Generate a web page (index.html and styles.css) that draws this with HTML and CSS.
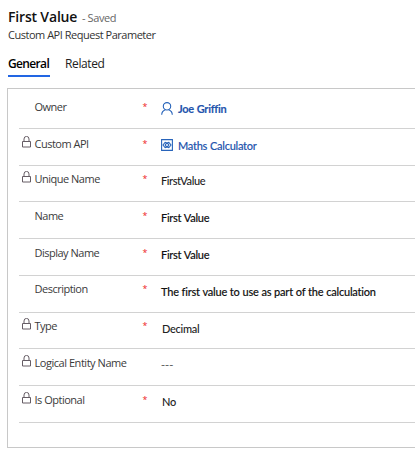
FILE: index.html
```
<!DOCTYPE html>
<html lang="en">
<head>
<meta charset="utf-8">
<title>First Value</title>
<link rel="stylesheet" href="styles.css">
</head>
<body>
<svg class="defs" width="0" height="0">
  <symbol id="lock" viewBox="0 0 9 12"><path d="M.5 5.500h8v5.500h-8zM2 5.500V3a2.500 2.600 0 0 1 5 0v2.500" fill="none" stroke="currentColor"/></symbol>
</svg>
<header class="head">
  <div class="title-line"><h1 class="title">First Value</h1><span class="saved">- Saved</span></div>
  <div class="subtitle">Custom API Request Parameter</div>
  <nav class="tabs"><a class="tab active">General</a><a class="tab related">Related</a></nav>
</header>
<main class="panel">
  <div class="row owner"><span></span><span class="label">Owner</span><span class="req">*</span>
    <span class="value link bold"><svg class="icon" width="12" height="13" viewBox="0 0 12 13"><circle cx="6" cy="4.3" r="3.7"/><path d="M.7 12.700C.8 10 2.200 8.600 4.300 7.800M7.700 7.800c2.100.8 3.500 2.200 3.600 4.900"/></svg><span>Joe Griffin</span></span></div>
  <div class="row custom"><svg class="lock"><use href="#lock"/></svg><span class="label">Custom API</span><span class="req">*</span>
    <span class="value link"><svg class="icon" width="12" height="12" viewBox="0 0 12 12"><path d="M.6.6h10.800v10.800H.6z"/><path d="M4.400 3 2 6l2.400 3M7.600 3 10 6 7.600 9M4 3.200 6 4l2-.8M4 8.800 6 8l2 .8M4.200 6 5 4.600h2L7.800 6 7 7.400H5z"/></svg><span>Maths Calculator</span></span></div>
  <div class="row unique"><svg class="lock"><use href="#lock"/></svg><span class="label">Unique Name</span><span class="req">*</span><span class="value light tight">FirstValue</span></div>
  <div class="row"><span></span><span class="label">Name</span><span class="req">*</span><span class="value">First Value</span></div>
  <div class="row"><span></span><span class="label">Display Name</span><span class="req">*</span><span class="value">First Value</span></div>
  <div class="row desc"><span></span><span class="label">Description</span><span class="req">*</span><span class="value text">The first value to use as part of the calculation</span></div>
  <div class="row type"><svg class="lock"><use href="#lock"/></svg><span class="label">Type</span><span class="req">*</span><span class="value light inset">Decimal</span></div>
  <div class="row"><svg class="lock"><use href="#lock"/></svg><span class="label logical">Logical Entity Name</span><span></span><span class="value dashes">---</span></div>
  <div class="row"><svg class="lock"><use href="#lock"/></svg><span class="label">Is Optional</span><span class="req">*</span><span class="value light inset">No</span></div>
</main>
</body>
</html>
```
FILE: styles.css
```
* { box-sizing: border-box; }
body {
  margin: 0;
  height: 452px;
  overflow: hidden;
  background: #fff;
  color: #222;
  font: 11px/16px "Open Sans", "Noto Sans", sans-serif;
  white-space: nowrap;
}
.defs { display: block; }
.head { height: 88px; padding: 7px 0 0 8px; }
.title-line { display: flex; align-items: baseline; height: 20px; }
.title { margin: 0; width: 74px; font-size: 14px; line-height: 20px; font-weight: 600; letter-spacing: -.17px; color: #111; }
.saved { color: #666; letter-spacing: -.4px; }
.subtitle { color: #333; letter-spacing: -.48px; line-height: 15px; }
.tabs { display: flex; gap: 15px; margin-top: 12px; }
.tab { height: 23px; font-size: 12px; line-height: 20px; letter-spacing: -.38px; color: #222; }
.active { width: 42px; font-weight: 600; letter-spacing: -.65px; color: #000; border-bottom: 2px solid #2266e3; }
.panel { margin-left: 7px; height: 360px; padding-left: 11px; border: 1px solid #c8c8c8; border-right: 0; }
.row {
  --top: 6px;
  display: grid;
  grid-template-columns: 15.5px 107.500px 19px 1fr;
  align-items: start;
  height: 37px;
  padding-top: var(--top);
  border-bottom: 1px solid #d2d2d2;
}
.owner { --top: 10px; height: 40px; }
.custom { --top: 7px; }
.unique { --top: 5px; height: 36px; }
.desc { --top: 5px; }
.type { --top: 5px; height: 36px; }
.lock { width: 9px; height: 12px; margin: 0 0 0 3px; color: #665d65; }
.label { color: #3b3b3b; letter-spacing: -.5px; }
.logical { letter-spacing: -.46px; }
.req { color: #e22; font-size: 9px; line-height: 15px; padding-left: .5px; }
.value {
  display: flex;
  padding-top: 2px;
  font-family: Lato, "Open Sans", sans-serif;
  font-weight: 500;
  color: #111;
  letter-spacing: -.26px;
  word-spacing: .3px;
  -webkit-text-stroke: .12px currentColor;
}
.link { gap: 5px; color: #2454ad; }
.bold { font-weight: 700; }
.icon { margin-top: 1px; fill: none; stroke: #2864ba; stroke-width: 1.1; }
.light { color: #222; -webkit-text-stroke-width: 0; }
.tight { letter-spacing: -.4px; }
.text { letter-spacing: -.22px; }
.desc .value, .type .value { padding-top: 3px; }
.inset { padding-left: 1px; }
.dashes { color: #666; letter-spacing: 0; }
```
